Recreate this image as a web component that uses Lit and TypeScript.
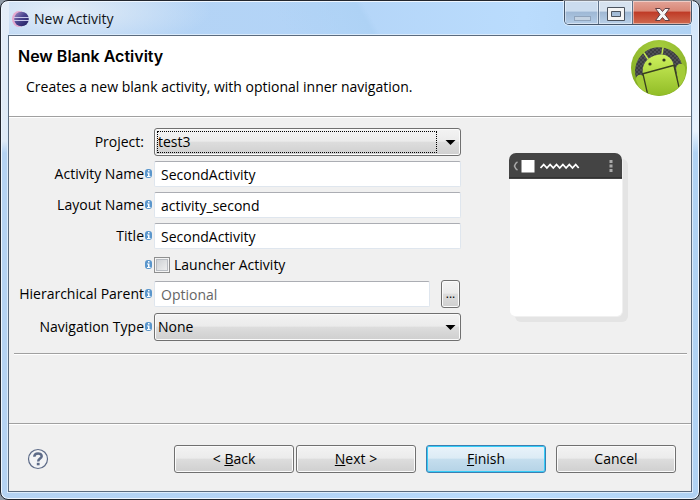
import { LitElement, html, css, svg, nothing } from "lit";
import { customElement, property } from "lit/decorators.js";

const baseStyles = css`
  * {
    box-sizing: border-box;
  }
  button,
  input,
  select {
    font: inherit;
    color: inherit;
    margin: 0;
  }
  button:focus-visible {
    outline: 1px dotted #000;
    outline-offset: -4px;
  }
`;

@customElement("window-title-bar")
export class WindowTitleBar extends LitElement {
  @property() caption = "";

  static styles = [
    baseStyles,
    css`
      :host {
        display: flex;
        align-items: flex-start;
        height: 33px;
        padding: 0 7px 0 10px;
      }
      .logo {
        flex: none;
        margin-top: 6px;
      }
      .caption {
        flex: 1;
        margin: 0 0 0 5px;
        font-size: 14px;
        font-weight: 400;
        line-height: 36px;
        color: #101418;
      }
      .controls {
        display: flex;
        height: 24px;
        border: 1px solid #45566b;
        border-top: 0;
        border-radius: 0 0 5px 5px;
        overflow: hidden;
        box-shadow: 0 0 0 1px rgba(255, 255, 255, 0.45);
      }
      .control {
        width: 34px;
        padding: 0;
        border: 0;
        border-right: 1px solid #5f7289;
        background: linear-gradient(#d6e2ef 0 44%, #9fb8d4 48%, #b9d0e8);
        box-shadow: inset 0 0 0 1px rgba(255, 255, 255, 0.45);
      }
      .minimize {
        background: linear-gradient(#cbdcee 0 44%, #9eb8d5 48%, #b3cce7);
      }
      .close {
        width: 58px;
        border-right: 0;
        background: linear-gradient(#e2a397, #d98776 44%, #bf3a26 48%, #cf6a50);
      }
      .control svg {
        display: block;
        margin: 0 auto;
      }
    `,
  ];

  render() {
    return html`
      <svg class="logo" width="18" height="24" viewBox="0 0 18 24" aria-hidden="true">
        <defs>
          <linearGradient id="ball" x1="0" x2="1" y1="0" y2="1">
            <stop offset="0" stop-color="#a58fc4" />
            <stop offset=".45" stop-color="#4b4590" />
            <stop offset="1" stop-color="#1f1c5c" />
          </linearGradient>
        </defs>
        <ellipse cx="8" cy="12" rx="7" ry="8" fill="#e3a9cf" />
        <circle cx="10.500" cy="12" r="7.300" fill="url(#ball)" />
        <path d="M3 10.500h15M3 13.500h15" stroke="#c9c9ea" stroke-width="1" />
      </svg>
      <h1 class="caption">${this.caption}</h1>
      <div class="controls">
        <button class="control minimize" aria-label="Minimize" disabled>
          <svg width="20" height="20" viewBox="0 0 20 20">
            <rect x="2.500" y="13.500" width="16" height="4" fill="#c3d2e2" stroke="#8fa3bb" />
          </svg>
        </button>
        <button class="control" aria-label="Maximize">
          <svg width="20" height="20" viewBox="0 0 20 20">
            <path d="M1.500 4.500h17v13h-17zM5.500 8.500v5h9v-5z" fill="#f5f5f5" fill-rule="evenodd" stroke="#4b535e" />
          </svg>
        </button>
        <button class="control close" aria-label="Close">
          <svg width="20" height="20" viewBox="0 0 20 20">
            <path d="M3.500 5.500h4.500l2.500 3 2.500-3h4.500l-4.500 6 4.500 6h-4.500l-2.500-3-2.500 3h-4.500l4.500-6z" fill="#f4f4f4" stroke="#5e3f43" stroke-linejoin="round" />
          </svg>
        </button>
      </div>
    `;
  }
}

@customElement("android-badge")
export class AndroidBadge extends LitElement {
  static styles = css`
    :host,
    svg {
      display: block;
    }
  `;

  render() {
    return html`
      <svg width="58" height="58" viewBox="0 0 58 58" aria-hidden="true">
        <defs>
          <radialGradient id="rim" cx=".5" cy=".2" r=".9">
            <stop offset="0" stop-color="#a9d040" />
            <stop offset="1" stop-color="#7ba41c" />
          </radialGradient>
          <linearGradient id="robot" x1="0" x2="0" y1="0" y2="1">
            <stop offset="0" stop-color="#cdf05c" />
            <stop offset="1" stop-color="#8cb822" />
          </linearGradient>
          <pattern id="mesh" width="4" height="4" patternUnits="userSpaceOnUse">
            <rect width="4" height="4" fill="#3c3d42" />
            <path d="M0 0h2v2H0zM2 2h2v2H2z" fill="#505156" />
          </pattern>
          <clipPath id="disc"><circle cx="29" cy="29" r="27.500" /></clipPath>
        </defs>
        <circle cx="29" cy="29" r="28" fill="url(#rim)" />
        <path d="M6 39A24 24 0 1 1 53 31L50 40H10z" fill="url(#mesh)" />
        <g clip-path="url(#disc)">
          <path d="M6 41c-1-5 6-8 8-2l5 18-6 1z" fill="#a4cc38" />
          <path d="M46 29c1-5 7-6 9-1l1 15-7 6z" fill="#a4cc38" />
          <path d="M13 35C11 25 18 18 27 16c9-2 16 3 17 12l6 20-12 12H19z" fill="url(#robot)" />
          <path d="M12 35l33-9M13 35l5 22M44 27l5 21" stroke="#39411f" stroke-width="1.300" fill="none" />
        </g>
        <path d="M18 20l-4-6M32 15l1-6" stroke="#bfe44e" stroke-width="1.500" stroke-linecap="round" />
        <circle cx="20" cy="25" r="1.600" fill="#33381f" />
        <circle cx="34" cy="21" r="1.600" fill="#33381f" />
      </svg>
    `;
  }
}

@customElement("activity-preview")
export class ActivityPreview extends LitElement {
  static styles = css`
    :host,
    svg {
      display: block;
    }
  `;

  render() {
    return html`
      <svg width="120" height="170" viewBox="0 0 120 170" role="img" aria-label="Blank activity preview">
        <rect x="6" y="6" width="113" height="163" rx="6" fill="#e4e4e4" />
        <rect x="0" y="0" width="114" height="164" rx="6" fill="#f0f0f0" />
        <rect x="1" y="1" width="112" height="162" rx="5" fill="#fff" />
        <path d="M0 26V7a7 7 0 0 1 7-7h99a7 7 0 0 1 7 7v19z" fill="#444" />
        <path d="M0 24.500h113" stroke="#333" />
        <path d="M8.500 9C6 10 6.500 11.500 5.500 13c1 1.500.5 3 3 4" fill="none" stroke="#aaa" stroke-width="1.500" />
        <rect x="12.500" y="7" width="13" height="12.500" fill="#fff" />
        <path d="M31.500 15l3.200-3.500 3.200 3.500 3.200-3.500 3.200 3.500 3.200-3.500 3.200 3.500 3.200-3.500 3.200 3.500 3.200-3.500 3.200 3.500 3.200-3.500 3 3.500" fill="none" stroke="#fff" stroke-width="1.800" />
        <path d="M100.500 7h3v3h-3zM100.500 11.500h3v3h-3zM100.500 16h3v3h-3z" fill="#aaa" />
      </svg>
    `;
  }
}

@customElement("app-root")
export class AppRoot extends LitElement {
  static styles = [
    baseStyles,
    css`
      :host {
        display: block;
        min-height: 100vh;
        background: #8f9aa6;
        font-family: "Open Sans", "Noto Sans", sans-serif;
        font-size: 14px;
        line-height: 20px;
        color: #000;
      }
      .window {
        display: flex;
        flex-direction: column;
        min-height: 100vh;
        padding: 0 7px 7px;
        border: 1px solid #22262e;
        border-radius: 8px;
        box-shadow: inset 0 0 0 1px #eef6ff;
        background:
          linear-gradient(#e4edf8, #dfeaf6 140px, transparent 152px) left / 8px 100% no-repeat,
          linear-gradient(#cfe3f8, #e8f2fc 130px, transparent 152px) right / 8px 100% no-repeat,
          radial-gradient(ellipse 150px 40px at 60px 10px, rgba(232, 239, 247, 0.9), transparent) top / 100% 34px no-repeat,
          linear-gradient(60deg, transparent 40%, #aed2f5 52%, transparent 53%) top / 100% 34px no-repeat,
          linear-gradient(90deg, #b5d3f3, #b3d4f7 45%, #badcfd 75%, #b0d2f3);
      }
      .titlebar {
        margin: 0 -7px;
      }
      .client {
        flex: 1;
        display: flex;
        flex-direction: column;
        margin-top: 1px;
        border: 1px solid #5b6b7e;
        background: #f0f0f0;
        box-shadow: 0 0 0 1px #dcecfc;
      }
      .banner {
        display: flex;
        justify-content: space-between;
        height: 81px;
        padding: 3px 3px 0 9px;
        border-bottom: 1px solid #a0a0a0;
        background: #fff;
        box-shadow: 0 1px #fff;
      }
      .heading {
        margin: 7px 0 0;
        font-family: Inter, sans-serif;
        font-size: 16px;
        font-weight: 600;
        line-height: 20px;
      }
      .summary {
        margin: 11px 0 0 8px;
      }
      .body {
        flex: 1;
        padding: 11px 4px 0 5px;
      }
      .fields {
        display: flex;
        padding: 0 0 12px 5px;
        border-bottom: 1px solid #a0a0a0;
        box-shadow: 0 1px #fff;
      }
      .form {
        flex: 1;
        display: flex;
        flex-direction: column;
        gap: 5px;
      }
      .row {
        display: grid;
        grid-template-columns: 125px 10px minmax(0, 1fr);
        align-items: center;
      }
      .row.tick {
        height: 21px;
      }
      .label {
        text-align: right;
        white-space: nowrap;
      }
      .info {
        display: block;
      }
      .text {
        width: 100%;
        height: 26px;
        padding: 0 6px;
        border: 1px solid #dfe6ee;
        border-top-color: #abadb3;
        border-radius: 2px;
        background: #fff;
        outline: 0;
      }
      .text::placeholder {
        color: #666;
        opacity: 1;
      }
      .combo {
        position: relative;
        height: 28px;
      }
      .combo select {
        display: block;
        width: 100%;
        height: 100%;
        padding: 0 24px 0 3px;
        appearance: none;
        outline: 0;
      }
      .face {
        border: 1px solid #707070;
        border-radius: 3px;
        background: linear-gradient(#f3f3f3, #ebebeb 47%, #dddddd 50%, #cfcfcf);
        box-shadow: inset 0 0 0 1px #fbfbfb;
      }
      .arrow {
        position: absolute;
        top: 12px;
        right: 5px;
        pointer-events: none;
      }
      .focus {
        position: absolute;
        inset: 3px 24px 3px 3px;
        border: 1px dotted #000;
        pointer-events: none;
      }
      .check {
        display: flex;
        align-items: center;
        gap: 4px;
      }
      .check input {
        width: 16px;
        height: 16px;
        appearance: none;
        border: 1px solid #8e8f8f;
        background: linear-gradient(135deg, #c8ccd0, #f4f4f4);
        box-shadow: inset 0 0 0 1px #f4f4f4, inset 0 0 0 2px #b8bcc2;
      }
      .check input:checked {
        background: #3b5a82;
      }
      .browse-group {
        display: flex;
        align-items: center;
        gap: 11px;
        padding-right: 1px;
      }
      .browse {
        flex: none;
        width: 19px;
        height: 28px;
        padding: 0;
        font-size: 12px;
      }
      .side {
        flex: none;
        width: 226px;
        padding: 25px 0 0 48px;
      }
      .footer {
        display: flex;
        align-items: center;
        height: 68px;
        padding: 2px 15px 0 18px;
        border-top: 1px solid #a0a0a0;
        box-shadow: inset 0 1px #fff;
      }
      .help {
        width: 22px;
        height: 22px;
        padding: 0;
        border: 0;
        background: none;
      }
      .help svg {
        display: block;
      }
      .actions {
        display: flex;
        gap: 10px;
        margin-left: auto;
      }
      .pair {
        display: flex;
        gap: 2px;
      }
      .action {
        width: 120px;
        height: 28px;
        padding: 0;
      }
      .action.primary {
        border-color: #3c7fb1;
        background: linear-gradient(#e9f3fa, #dcebf5 47%, #c5deee 50%, #b5d3e6);
        box-shadow: inset 0 0 0 1px #35cdf8;
      }
    `,
  ];

  private info() {
    return html`<svg class="info" width="9" height="10" viewBox="0 0 9 10" aria-hidden="true">
      <rect x="1" y="0" width="7" height="9" rx="3" fill="#5a96cc" />
      <path d="M4 1h1.500v1.500H4zM3 3.500h2.500V7h1v1H3V7h1V4.500H3z" fill="#fff" />
    </svg>`;
  }

  private textRow(id: string, label: string, value: string) {
    return html`<div class="row">
      <label class="label" for=${id}>${label}</label>
      ${this.info()}
      <input class="text" id=${id} type="text" .value=${value} />
    </div>`;
  }

  private comboRow(id: string, label: string, value: string, focused: boolean) {
    return html`<div class="row">
      <label class="label" for=${id}>${label}</label>
      ${focused ? html`<span></span>` : this.info()}
      <div class="combo">
        <select class="face" id=${id}>
          <option>${value}</option>
        </select>
        ${focused ? html`<span class="focus"></span>` : nothing}
        <svg class="arrow" width="11" height="6" viewBox="0 0 11 6" aria-hidden="true">
          ${svg`<path d="M0.500 0h10L5.500 5z" />`}
        </svg>
      </div>
    </div>`;
  }

  render() {
    return html`
      <div class="window">
        <window-title-bar class="titlebar" caption="New Activity"></window-title-bar>
        <main class="client">
          <header class="banner">
            <div>
              <h2 class="heading">New Blank Activity</h2>
              <p class="summary">Creates a new blank activity, with optional inner navigation.</p>
            </div>
            <android-badge></android-badge>
          </header>
          <section class="body">
            <div class="fields">
              <div class="form">
                ${this.comboRow("project", "Project:", "test3", true)}
                ${this.textRow("activity", "Activity Name", "SecondActivity")}
                ${this.textRow("layout", "Layout Name", "activity_second")}
                ${this.textRow("title", "Title", "SecondActivity")}
                <div class="row tick">
                  <span></span>
                  ${this.info()}
                  <label class="check"><input type="checkbox" />Launcher Activity</label>
                </div>
                <div class="row">
                  <label class="label" for="parent">Hierarchical Parent</label>
                  ${this.info()}
                  <div class="browse-group">
                    <input class="text" id="parent" type="text" placeholder="Optional" />
                    <button class="browse face" aria-label="Browse for parent">...</button>
                  </div>
                </div>
                ${this.comboRow("navigation", "Navigation Type", "None", false)}
              </div>
              <div class="side"><activity-preview></activity-preview></div>
            </div>
          </section>
          <footer class="footer">
            <button class="help" aria-label="Help">
              <svg width="22" height="22" viewBox="0 0 22 22">
                <circle cx="11" cy="11" r="9.500" fill="#f3f4f6" stroke="#5d6b88" stroke-width="1.200" />
                <path d="M7.300 8.800C7.300 4.300 14.800 4.500 14.700 8.300 14.600 10.700 11.200 10.500 11.200 13.400" fill="none" stroke="#5d6b88" stroke-width="2.500" />
                <rect x="9.800" y="14.800" width="2.800" height="2.500" fill="#5d6b88" />
              </svg>
            </button>
            <div class="actions">
              <div class="pair">
                <button class="action face">&lt; <u>B</u>ack</button>
                <button class="action face"><u>N</u>ext &gt;</button>
              </div>
              <button class="action face primary"><u>F</u>inish</button>
              <button class="action face">Cancel</button>
            </div>
          </footer>
        </main>
      </div>
    `;
  }
}
